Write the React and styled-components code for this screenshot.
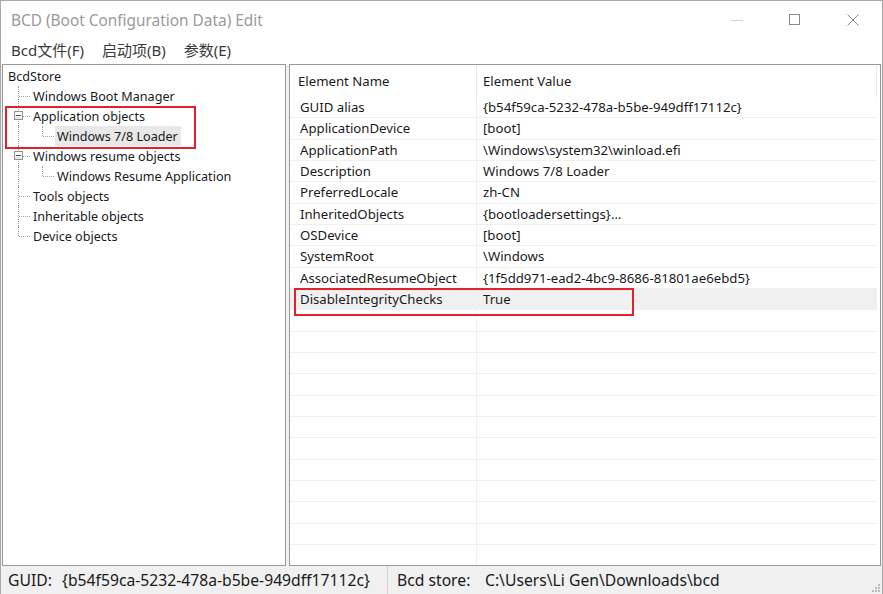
import React from "react";
import styled, { createGlobalStyle } from "styled-components";

const GlobalStyle = createGlobalStyle`
  html, body {
    margin: 0;
    padding: 0;
    background: #ffffff;
  }
  body {
    font-family: "Noto Sans", "Noto Sans CJK SC", sans-serif;
  }
`;

const treeItems = [
  { label: "Windows Boot Manager", guides: ["tee"] },
  { label: "Application objects", guides: ["tee"], box: true },
  { label: "Windows 7/8 Loader", guides: ["pipe", "elbow"], selected: true },
  { label: "Windows resume objects", guides: ["tee"], box: true },
  { label: "Windows Resume Application", guides: ["pipe", "elbow"] },
  { label: "Tools objects", guides: ["tee"] },
  { label: "Inheritable objects", guides: ["tee"] },
  { label: "Device objects", guides: ["elbow"] },
];

const elements = [
  ["GUID alias", "{b54f59ca-5232-478a-b5be-949dff17112c}"],
  ["ApplicationDevice", "[boot]"],
  ["ApplicationPath", "\\Windows\\system32\\winload.efi"],
  ["Description", "Windows 7/8 Loader"],
  ["PreferredLocale", "zh-CN"],
  ["InheritedObjects", "{bootloadersettings}…"],
  ["OSDevice", "[boot]"],
  ["SystemRoot", "\\Windows"],
  ["AssociatedResumeObject", "{1f5dd971-ead2-4bc9-8686-81801ae6ebd5}"],
  ["DisableIntegrityChecks", "True"],
];

const EMPTY_ROWS = 12;

function App() {
  return (
    <>
      <GlobalStyle />
      <Window>
        <TitleBar>
          <Title>BCD (Boot Configuration Data) Edit</Title>
          <Controls>
            <ControlButton>
              <svg width="12" height="12" viewBox="0 0 12 12">
                <line x1="0" y1="6.5" x2="12" y2="6.5" stroke="#d0d0d0" strokeWidth="1" />
              </svg>
            </ControlButton>
            <ControlButton>
              <svg width="12" height="12" viewBox="0 0 12 12">
                <rect x="0.5" y="0.5" width="10" height="10" fill="none" stroke="#8a8a8a" strokeWidth="1" />
              </svg>
            </ControlButton>
            <ControlButton>
              <svg width="12" height="12" viewBox="0 0 12 12">
                <path d="M0.5 0.5 L11.5 11.5 M11.5 0.5 L0.5 11.5" stroke="#8a8a8a" strokeWidth="1" />
              </svg>
            </ControlButton>
          </Controls>
        </TitleBar>

        <MenuBar>
          <MenuItem>Bcd文件(F)</MenuItem>
          <MenuItem>启动项(B)</MenuItem>
          <MenuItem>参数(E)</MenuItem>
        </MenuBar>

        <Main>
          <TreePanel>
            <TreeRow>
              <RootLabel>BcdStore</RootLabel>
            </TreeRow>
            {treeItems.map((item) => (
              <TreeRow key={item.label}>
                {item.guides.map((g, i) => (
                  <Guide key={i} $type={g}>
                    {item.box && i === item.guides.length - 1 && <ExpandBox />}
                  </Guide>
                ))}
                <NodeLabel $selected={item.selected}>{item.label}</NodeLabel>
              </TreeRow>
            ))}
            <Highlight $left={2} $top={41} $width={191} $height={43} />
          </TreePanel>

          <ListPanel>
            <HeaderRow>
              <HeaderCell $first>Element Name</HeaderCell>
              <HeaderCell>Element Value</HeaderCell>
            </HeaderRow>
            {elements.map(([name, value]) => (
              <ListRow key={name} $hover={name === "DisableIntegrityChecks"}>
                <Cell $first>{name}</Cell>
                <Cell>{value}</Cell>
              </ListRow>
            ))}
            {Array.from({ length: EMPTY_ROWS }).map((_, i) => (
              <ListRow key={`empty-${i}`}>
                <Cell $first />
                <Cell />
              </ListRow>
            ))}
            <Highlight $left={4} $top={223} $width={340} $height={28} />
          </ListPanel>
        </Main>

        <StatusBar>
          <StatusSection $width={387}>
            <StatusLabel $width={54}>GUID:</StatusLabel>
            <span>{"{b54f59ca-5232-478a-b5be-949dff17112c}"}</span>
          </StatusSection>
          <StatusSection $last>
            <StatusLabel $width={88}>Bcd store:</StatusLabel>
            <span>C:\Users\Li Gen\Downloads\bcd</span>
          </StatusSection>
          <Grip>
            <svg width="10" height="10" viewBox="0 0 10 10">
              {[
                [8, 0], [8, 3], [5, 3], [8, 6], [5, 6], [2, 6],
              ].map(([x, y]) => (
                <rect key={`${x}-${y}`} x={x} y={y + 2} width="2" height="2" fill="#b8b8b8" />
              ))}
            </svg>
          </Grip>
        </StatusBar>
      </Window>
    </>
  );
}

export default App;

const Window = styled.div`
  width: 883px;
  height: 594px;
  box-sizing: border-box;
  border: 1px solid #a8a8a8;
  border-bottom: none;
  display: flex;
  flex-direction: column;
  background: #ffffff;
  overflow: hidden;
`;

const TitleBar = styled.div`
  height: 39px;
  display: flex;
  align-items: center;
  justify-content: space-between;
  flex-shrink: 0;
`;

const Title = styled.div`
  padding-left: 10px;
  font-size: 15.4px;
  color: #999999;
`;

const Controls = styled.div`
  display: flex;
  height: 100%;
`;

const ControlButton = styled.div`
  width: 58px;
  display: flex;
  align-items: center;
  justify-content: center;
  padding-bottom: 2px;
`;

const MenuBar = styled.div`
  height: 24px;
  display: flex;
  align-items: center;
  padding-left: 10px;
  gap: 18px;
  flex-shrink: 0;
`;

const MenuItem = styled.div`
  font-size: 15px;
  color: #3a3a3a;
  padding-bottom: 5px;
`;

const Main = styled.div`
  flex: 1;
  display: flex;
  gap: 3px;
  padding: 0 1px;
  background: #f0f0f0;
  min-height: 0;
`;

const TreePanel = styled.div`
  position: relative;
  width: 284px;
  flex-shrink: 0;
  box-sizing: border-box;
  border: 1px solid #9a9a9a;
  background: #ffffff;
  padding: 1px 0 0 3px;
  font-size: 12.6px;
  color: #1a1a1a;
`;

const TreeRow = styled.div`
  height: 20px;
  display: flex;
  align-items: stretch;
`;

const RootLabel = styled.div`
  display: flex;
  align-items: center;
  padding-left: 2px;
`;

const Guide = styled.div`
  position: relative;
  width: 24px;
  flex-shrink: 0;

  &::before {
    content: "";
    position: absolute;
    left: 12px;
    top: 0;
    height: ${(p) => (p.$type === "elbow" ? "10px" : "100%")};
    border-left: 1px dotted #a0a0a0;
  }

  &::after {
    content: "";
    display: ${(p) => (p.$type === "pipe" ? "none" : "block")};
    position: absolute;
    left: 13px;
    top: 10px;
    width: 11px;
    border-top: 1px dotted #a0a0a0;
  }
`;

const ExpandBox = styled.div`
  position: absolute;
  left: 8px;
  top: 5px;
  width: 9px;
  height: 9px;
  box-sizing: border-box;
  border: 1px solid #919191;
  background: linear-gradient(#ffffff, #e8e8e8);
  z-index: 1;

  &::after {
    content: "";
    position: absolute;
    left: 1px;
    right: 1px;
    top: 3px;
    height: 1px;
    background: #3d5a8c;
  }
`;

const NodeLabel = styled.div`
  display: flex;
  align-items: center;
  margin-left: 1px;
  padding: 0 3px 0 2px;
  background: ${(p) => (p.$selected ? "#e8e8e8" : "transparent")};
  white-space: nowrap;
`;

const Highlight = styled.div`
  position: absolute;
  left: ${(p) => p.$left}px;
  top: ${(p) => p.$top}px;
  width: ${(p) => p.$width}px;
  height: ${(p) => p.$height}px;
  box-sizing: border-box;
  border: 2px solid #e3202b;
  pointer-events: none;
`;

const ListPanel = styled.div`
  position: relative;
  flex: 1;
  box-sizing: border-box;
  border: 1px solid #9a9a9a;
  background: #ffffff;
  font-size: 13.2px;
  color: #1a1a1a;
  overflow: hidden;
  padding: 1px 3px 0 0;
`;

const HeaderRow = styled.div`
  height: 31px;
  display: flex;
  border-right: 1px solid #eaeaea;
`;

const HeaderCell = styled.div`
  width: ${(p) => (p.$first ? "187px" : "auto")};
  flex: ${(p) => (p.$first ? "none" : "1")};
  box-sizing: border-box;
  display: flex;
  align-items: center;
  padding-left: ${(p) => (p.$first ? "8px" : "6px")};
  padding-bottom: 1px;
  border-right: ${(p) => (p.$first ? "1px solid #e5e5e5" : "none")};
`;

const ListRow = styled.div`
  height: 21.33px;
  display: flex;
  box-sizing: border-box;
  border-bottom: 1px solid #f0f0f0;
  background: ${(p) => (p.$hover ? "#f0f0f0" : "transparent")};
`;

const Cell = styled.div`
  width: ${(p) => (p.$first ? "187px" : "auto")};
  flex: ${(p) => (p.$first ? "none" : "1")};
  box-sizing: border-box;
  display: flex;
  align-items: center;
  padding-left: ${(p) => (p.$first ? "10px" : "6px")};
  border-right: ${(p) => (p.$first ? "1px solid #f0f0f0" : "none")};
  white-space: nowrap;
`;

const StatusBar = styled.div`
  height: 28px;
  flex-shrink: 0;
  display: flex;
  align-items: stretch;
  background: #f0f0f0;
  font-size: 15.7px;
  color: #1a1a1a;
  position: relative;
`;

const StatusSection = styled.div`
  width: ${(p) => (p.$width ? `${p.$width}px` : "auto")};
  flex: ${(p) => (p.$last ? "1" : "none")};
  display: flex;
  align-items: center;
  padding-left: ${(p) => (p.$last ? "9px" : "7px")};
  box-sizing: border-box;
  border-right: ${(p) => (p.$last ? "none" : "1px solid #d4d4d4")};
  white-space: nowrap;
`;

const StatusLabel = styled.span`
  display: inline-block;
  width: ${(p) => p.$width}px;
`;

const Grip = styled.div`
  position: absolute;
  right: 2px;
  bottom: 2px;
  display: flex;
`;
